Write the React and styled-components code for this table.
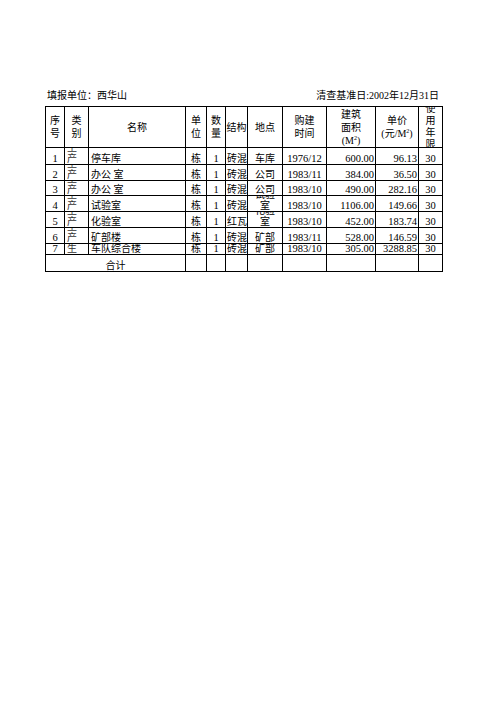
import React from "react";
import styled, { createGlobalStyle } from "styled-components";

const Global = createGlobalStyle`
  html, body { margin: 0; padding: 0; background: #fff; }
  body { font-family: "Liberation Serif", "Noto Sans CJK SC", serif; color: #000; }
`;

const Page = styled.div`
  width: 496px;
  height: 702px;
  padding: 90px 0 0 45px;
  box-sizing: border-box;
`;

const Sheet = styled.div`
  width: 398px;
`;

const TitleRow = styled.div`
  display: flex;
  justify-content: space-between;
  align-items: flex-end;
  height: 12px;
  padding: 0 4px 0 2px;
  margin-bottom: 4px;
  font-size: 10px;
  line-height: 12px;
`;

const Grid = styled.div`
  display: grid;
  grid-template-columns: 18px 23px 96px 20px 18px 21px 34px 43px 48px 42px 23px;
  grid-template-rows: 40px 16px 15px 14px 15px 15px 15px 10px 16px;
  gap: 1px;
  padding: 1px;
  background: #000;
  width: fit-content;
`;

const Cell = styled.div`
  background: #fff;
  overflow: hidden;
  display: flex;
  flex-direction: column;
  justify-content: ${(p) => p.$v || "flex-end"};
  align-items: ${(p) => p.$h || "flex-start"};
  text-align: ${(p) => (p.$h === "center" ? "center" : p.$h === "flex-end" ? "right" : "left")};
  padding: 0 ${(p) => p.$pad ?? 1}px;
  font-size: ${(p) => p.$size || 10}px;
  line-height: ${(p) => p.$lh || 11}px;
  white-space: nowrap;
  grid-column: ${(p) => (p.$span ? `span ${p.$span}` : "auto")};
  color: ${(p) => p.$color || "#000"};
`;

const HeadCell = styled(Cell).attrs({ $v: "center", $h: "center" })`
  line-height: ${(p) => p.$lh || 13}px;
`;

const Line = styled.span`
  display: block;
  flex-shrink: 0;
`;

const Stack = ({ lines }) => lines.map((l, i) => <Line key={i}>{l}</Line>);

const Sup = styled.sup`
  font-size: 6px;
  vertical-align: top;
  line-height: 8px;
`;

const headers = [
  { lines: ["序", "号"] },
  { lines: ["类", "别"] },
  { lines: ["名称"] },
  { lines: ["单", "位"] },
  { lines: ["数", "量"] },
  { lines: ["结构"] },
  { lines: ["地点"] },
  { lines: ["购建", "时间"] },
  { lines: ["建筑", "面积", <>(M<Sup>2</Sup>)</>] },
  { lines: ["单价", <>(元/M<Sup>2</Sup>)</>] },
  { lines: ["使", "用", "年", "限"], lh: 12 },
];

const rows = [
  [1, ["生", "产"], "停车库", "栋", 1, "砖混", ["车库"], "1976/12", "600.00", "96.13", 30],
  [2, ["生", "产"], "办公 室", "栋", 1, "砖混", ["公司"], "1983/11", "384.00", "36.50", 30],
  [3, ["生", "产"], "办公 室", "栋", 1, "砖混", ["公司"], "1983/10", "490.00", "282.16", 30],
  [4, ["生", "产"], "试验室", "栋", 1, "砖混", ["试验", "室"], "1983/10", "1106.00", "149.66", 30],
  [5, ["生", "产"], "化验室", "栋", 1, "红瓦", ["化验", "室"], "1983/10", "452.00", "183.74", 30],
  [6, ["生", "产"], "矿部楼", "栋", 1, "砖混", ["矿部"], "1983/11", "528.00", "146.59", 30],
  [7, ["生"], "车队综合楼", "栋", 1, "砖混", ["矿部"], "1983/10", "305.00", "3288.85", 30],
];

export default function App() {
  return (
    <>
      <Global />
      <Page>
        <Sheet>
          <TitleRow>
            <span>填报单位：西华山</span>
            <span>清查基准日:2002年12月31日</span>
          </TitleRow>
          <Grid>
            {headers.map((h, i) => (
              <HeadCell key={i} $lh={h.lh}>
                <Stack lines={h.lines} />
              </HeadCell>
            ))}
            {rows.map((r) => (
              <React.Fragment key={r[0]}>
                <Cell $h="center" $size={10.5}>{r[0]}</Cell>
                <Cell $pad={2} $color="#333">
                  <Stack lines={r[1]} />
                </Cell>
                <Cell $pad={2}>{r[2]}</Cell>
                <Cell $h="center">{r[3]}</Cell>
                <Cell $h="center" $size={10.5}>{r[4]}</Cell>
                <Cell $pad={1}>{r[5]}</Cell>
                <Cell $h="center">
                  <Stack lines={r[6]} />
                </Cell>
                <Cell $h="center" $size={10.5}>{r[7]}</Cell>
                <Cell $h="flex-end" $size={10.5}>{r[8]}</Cell>
                <Cell $h="flex-end" $size={10.5}>{r[9]}</Cell>
                <Cell $h="center" $size={10.5}>{r[10]}</Cell>
              </React.Fragment>
            ))}
            <Cell $span={3} $h="center">合计</Cell>
            {Array.from({ length: 8 }).map((_, i) => (
              <Cell key={i} />
            ))}
          </Grid>
        </Sheet>
      </Page>
    </>
  );
}
